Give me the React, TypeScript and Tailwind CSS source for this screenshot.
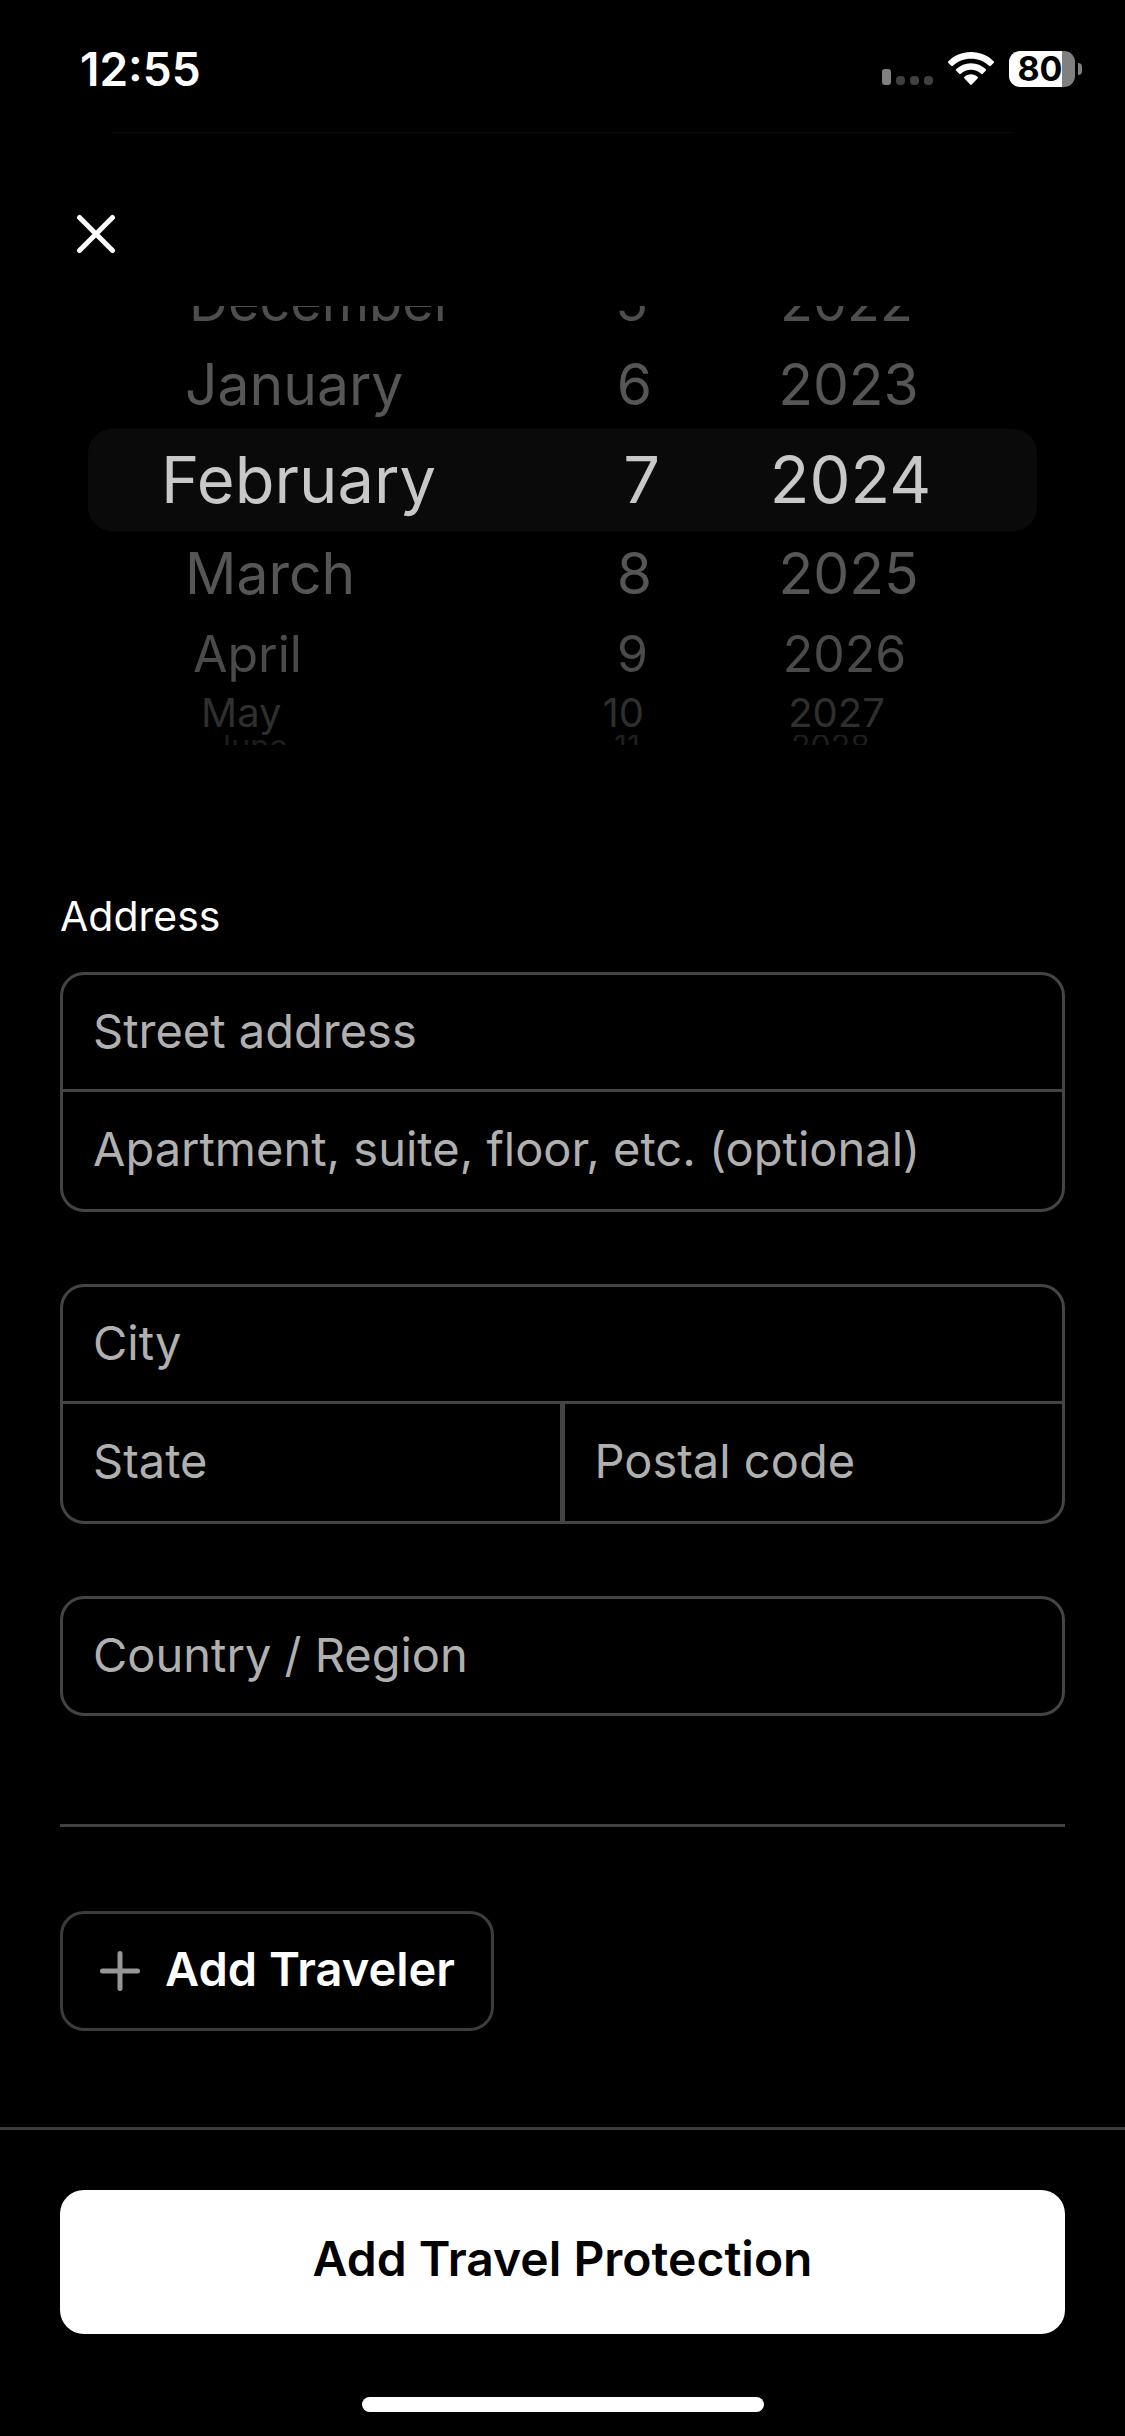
import { useState } from 'react'

const months = [
  'January',
  'February',
  'March',
  'April',
  'May',
  'June',
  'July',
  'August',
  'September',
  'October',
  'November',
  'December',
]

// rows of the wheel, from two above the selected one to four below it
const wheelRows = [
  { offset: -2, row: 'h-[35px] content-end text-[54px] leading-[78px] text-[#4e4e4e]', month: 'pl-[101px]', day: 'pr-6', year: 'pr-4' },
  { offset: -1, row: 'h-[88px] text-[57px] leading-[88px] text-[#565656]', month: 'pl-[97px]', day: 'pr-5', year: 'pr-3' },
  { offset: 0, row: 'h-[102px] rounded-3xl bg-[#0a0a0a] text-[65px] leading-[102px] text-[#c8c8c8]', month: 'pl-[73px]', day: 'pr-3', year: 'pr-2' },
  { offset: 1, row: 'h-[86px] text-[57px] leading-[86px] text-[#565656]', month: 'pl-[97px]', day: 'pr-5', year: 'pr-3' },
  { offset: 2, row: 'h-[74px] text-[50px] leading-[74px] text-[#4a4a4a]', month: 'pl-[105px]', day: 'pr-6', year: 'pr-5' },
  { offset: 3, row: 'h-[44px] text-[40px] leading-[44px] text-[#2f2f2f]', month: 'pl-[113px]', day: 'pr-7', year: 'pr-9' },
  { offset: 4, row: 'h-[10px] content-start text-[32px] leading-[24px] text-[#1e1e1e]', month: 'pl-[125px]', day: 'pr-8', year: 'pr-12' },
]

function DateWheel() {
  const [month, setMonth] = useState(1)
  const [day, setDay] = useState(7)
  const [year, setYear] = useState(2024)

  return (
    <div role="group" aria-label="Date" className="mx-[88px] h-[444px] overflow-hidden">
      {wheelRows.map((r) => {
        const m = (month + r.offset + 12) % 12
        const d = ((day + r.offset - 1 + 31) % 31) + 1
        const y = year + r.offset
        return (
          <div key={r.offset} className={`grid grid-cols-[6fr_2fr_5fr] overflow-hidden ${r.row}`}>
            <button type="button" onClick={() => setMonth(m)} className={`text-left ${r.month}`}>
              {months[m]}
            </button>
            <button type="button" onClick={() => setDay(d)} className={`text-right ${r.day}`}>
              {d}
            </button>
            <button type="button" onClick={() => setYear(y)} className={`text-center ${r.year}`}>
              {y}
            </button>
          </div>
        )
      })}
    </div>
  )
}

function Field({ label, className = '' }: { label: string; className?: string }) {
  return (
    <input
      type="text"
      aria-label={label}
      placeholder={label}
      className={`h-[114px] w-full min-w-0 bg-transparent px-[30px] pb-1 text-[47px] text-white outline-none placeholder:text-[#b0b0b0] ${className}`}
    />
  )
}

function StatusBar() {
  return (
    <div className="flex h-[132px] items-center justify-between pt-1.5 pr-[43px] pl-20">
      <span className="text-[46px] leading-none font-semibold">12:55</span>
      <div className="flex items-center gap-[15px]">
        <svg width="51" height="36" viewBox="0 0 51 36" aria-hidden="true">
          <rect x="0" y="18" width="9" height="16" rx="3" fill="#808080" />
          <rect x="14" y="25" width="9" height="9" rx="4" fill="#404040" />
          <rect x="28" y="25" width="9" height="9" rx="4" fill="#404040" />
          <rect x="42" y="25" width="9" height="9" rx="4" fill="#404040" />
        </svg>
        <svg width="46" height="36" viewBox="0 0 46 36" aria-hidden="true" fill="#fff">
          <path d="M23 1C32 1 40 4.500 45.600 10.200a1.200 1.200 0 0 1 0 1.700l-2.800 2.900a1.200 1.200 0 0 1-1.700 0C36.300 10.300 30 7.700 23 7.700S9.700 10.300 4.900 14.800a1.200 1.200 0 0 1-1.700 0L.4 11.900a1.200 1.200 0 0 1 0-1.700C6 4.500 14 1 23 1Z" />
          <path d="M23 12.200c5.700 0 10.800 2.200 14.700 5.800a1.200 1.200 0 0 1 0 1.800l-2.900 2.900a1.200 1.200 0 0 1-1.700 0c-2.700-2.400-6.200-3.900-10.100-3.900s-7.400 1.500-10.100 3.900a1.200 1.200 0 0 1-1.700 0l-2.900-2.900a1.200 1.200 0 0 1 0-1.800c3.900-3.600 9-5.800 14.700-5.800Z" />
          <path d="M23 23.300c2.500 0 4.800.9 6.500 2.400a1.100 1.100 0 0 1 0 1.700l-5.700 6a1.100 1.100 0 0 1-1.600 0l-5.700-6a1.100 1.100 0 0 1 0-1.700c1.700-1.500 4-2.400 6.500-2.400Z" />
        </svg>
        <div className="flex items-center gap-[3px]">
          <div className="flex h-9 w-[66px] items-center justify-center rounded-[11px] bg-[linear-gradient(to_right,#fff_53px,#808080_53px)] pr-1 text-[34px] leading-none font-bold text-black">
            80
          </div>
          <div className="h-3 w-1 rounded-r-full bg-[#808080]" />
        </div>
      </div>
    </div>
  )
}

export default function App() {
  return (
    <div className="flex min-h-screen flex-col bg-black font-['Inter','Liberation_Sans',sans-serif] text-white">
      <StatusBar />
      <div className="mx-28 h-px bg-[#0a0a0a]" />

      <header className="px-[66px] pt-[71px] pb-[42px]">
        <button type="button" aria-label="Close" className="flex size-[60px] items-center justify-center">
          <svg width="40" height="40" viewBox="0 0 40 40" fill="none" stroke="#fff" strokeWidth="5" strokeLinecap="round">
            <path d="M3.500 3.500l33 33M36.500 3.500l-33 33" />
          </svg>
        </button>
      </header>

      <main className="flex-1">
        <DateWheel />

        <form className="px-[60px] pt-[136px]">
          <fieldset>
            <legend className="text-[41px] leading-[60px]">Address</legend>

            <div className="mt-[26px] rounded-3xl border-3 border-[#444]">
              <Field label="Street address" />
              <div className="border-t-3 border-[#444]">
                <Field label="Apartment, suite, floor, etc. (optional)" className="h-[117px]" />
              </div>
            </div>

            <div className="mt-[72px] rounded-3xl border-3 border-[#444]">
              <Field label="City" />
              <div className="grid grid-cols-2 border-t-3 border-[#444]">
                <Field label="State" className="h-[117px] border-r-3 border-[#444]" />
                <Field label="Postal code" className="h-[117px] border-l-2 border-[#444]" />
              </div>
            </div>

            <div className="mt-[72px] rounded-3xl border-3 border-[#444]">
              <Field label="Country / Region" />
            </div>
          </fieldset>
        </form>

        <div className="mx-[60px] mt-[108px] border-t-3 border-[#404040] pt-[84px]">
          <button
            type="button"
            className="flex h-[120px] items-center gap-6 rounded-3xl border-3 border-[#3c3c3c] px-9 text-[47px] font-semibold"
          >
            <svg width="42" height="42" viewBox="0 0 42 42" fill="none" stroke="#969696" strokeWidth="5" strokeLinecap="round">
              <path d="M21 3.500v35M3.500 21h35" />
            </svg>
            <span className="pb-1">Add Traveler</span>
          </button>
        </div>
      </main>

      <footer className="border-t-3 border-[#3c3c3c] px-[60px] pt-[60px] pb-6">
        <button type="button" className="h-36 w-full rounded-3xl bg-white pb-1.5 text-[48px] font-semibold text-black">
          Add Travel Protection
        </button>
        <div className="mx-auto mt-[63px] h-[15px] w-[402px] rounded-full bg-white" />
      </footer>
    </div>
  )
}
